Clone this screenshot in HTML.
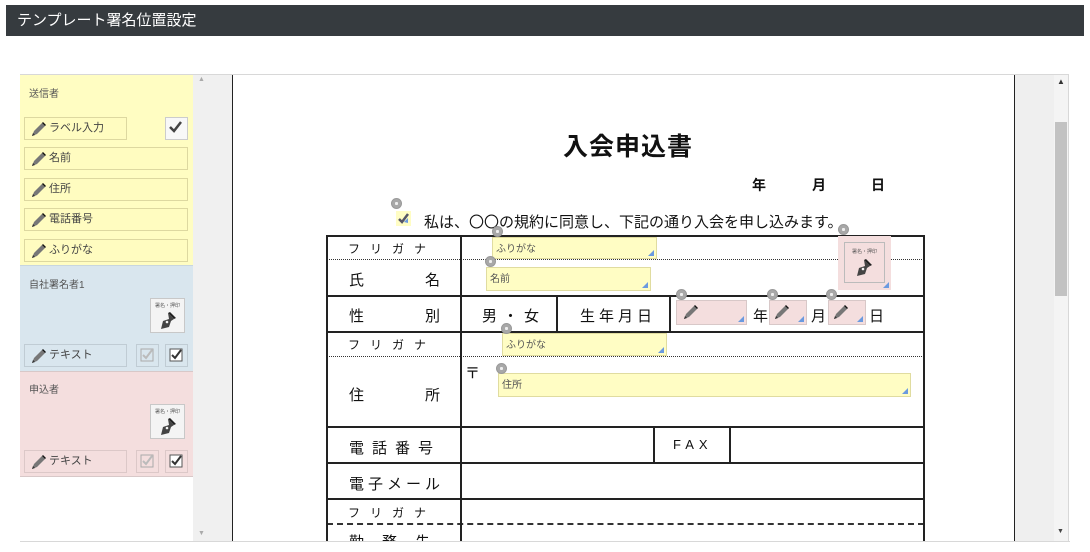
<!DOCTYPE html>
<html><head><meta charset="utf-8">
<style>
*{box-sizing:border-box;margin:0;padding:0}
body{width:1090px;height:549px;overflow:hidden;background:#fff;font-family:"Liberation Sans","Noto Sans CJK JP",sans-serif;position:relative}
.a{position:absolute}
.title{left:6px;top:5px;width:1078px;height:31px;background:#363b3f;color:#fff;font-size:15px;line-height:31px;padding-left:11px}
.btn{position:absolute;border:1px solid #ddd8a0;background:#fffcc0;font-size:11px;color:#444;height:23px;line-height:21px;padding-left:24px}
.pen{position:absolute;left:6px;top:4px}
.cb{position:absolute;width:23px;height:23px;border:1px solid #ccc;background:#f6f6f6}
.lbl{position:absolute;font-size:10px;color:#555}
.sig{position:absolute;width:35px;height:35px;border:1px solid #c8c8c8;background:#f4f4f4}
.h{position:absolute;height:2px;background:#222}
.d{position:absolute;height:0;border-top:1px dotted #333}
.v{position:absolute;width:2px;background:#222}
.t{position:absolute;font-size:15px;color:#111;white-space:nowrap}
.f{position:absolute;background:#fffdc4;border:1px solid #e0dca0;font-size:10px;color:#555;padding:2px 3px}
.pk{position:absolute;background:#f4dede;border:1px solid #d8c8c8}
.x{position:absolute;width:11px;height:11px;border-radius:50%;background:#a8a8a8;border:1px solid #999}
.x:after{content:"";position:absolute;left:3px;top:3px;width:3px;height:3px;background:#eee;border-radius:1px}
.tri{position:absolute;right:2px;bottom:2px;width:0;height:0;border-left:6px solid transparent;border-bottom:6px solid #6b9ae0}
</style></head><body>
<div class="a title">テンプレート署名位置設定</div>

<div class="a" style="left:20px;top:74px;width:1049px;height:468px;border:1px solid #d8d8d8;border-left:none"></div>
<div class="a" style="left:20px;top:75px;width:173px;height:190px;background:#fffdc2"></div>
<div class="a" style="left:20px;top:265px;width:173px;height:106px;background:#d9e6ee;border-top:1px solid #c8d6de"></div>
<div class="a" style="left:20px;top:371px;width:173px;height:106px;background:#f4dede;border-top:1px solid #d8c8c8;border-bottom:1px solid #d8c8c8"></div>
<div class="lbl" style="left:29px;top:85px">送信者</div>
<div class="lbl" style="left:29px;top:276px">自社署名者1</div>
<div class="lbl" style="left:29px;top:381px">申込者</div>

<svg width="0" height="0" style="position:absolute"><defs>
<g id="pn"><path d="M1 14 L3 9 L11 1 L14 4 L6 12 Z" fill="#777"/><path d="M11 1 L14 4 L15 3 L12 0 Z" fill="#111"/><path d="M1 14 L2 11 L4 13 Z" fill="#333"/></g>
<g id="fp"><path d="M9 2 L15 8 L12 10 L10 16 L2 18 L4 10 L10 8 Z" fill="#444"/><path d="M11 1 L17 7 L15 8 L9 2 Z" fill="#222"/><circle cx="8" cy="11" r="1.3" fill="#f4f4f4"/></g>
<g id="ck"><path d="M4 9 L8 13 L15 4" stroke="#444" stroke-width="2.5" fill="none"/></g>
</defs></svg>

<div class="btn" style="left:24px;top:117px;width:103px"><svg class="pen" width="16" height="16"><use href="#pn"/></svg>ラベル入力</div>
<div class="cb" style="left:165px;top:117px;background:#f8f8f8"><svg width="21" height="21"><use href="#ck"/></svg></div>
<div class="btn" style="left:24px;top:147px;width:164px"><svg class="pen" width="16" height="16"><use href="#pn"/></svg>名前</div>
<div class="btn" style="left:24px;top:178px;width:164px"><svg class="pen" width="16" height="16"><use href="#pn"/></svg>住所</div>
<div class="btn" style="left:24px;top:208px;width:164px"><svg class="pen" width="16" height="16"><use href="#pn"/></svg>電話番号</div>
<div class="btn" style="left:24px;top:239px;width:164px"><svg class="pen" width="16" height="16"><use href="#pn"/></svg>ふりがな</div>

<div class="sig" style="left:150px;top:298px"><div style="font-size:5px;color:#555;text-align:center;margin-top:3px">署名・押印</div><svg style="position:absolute;left:8px;top:12px" width="20" height="20"><use href="#fp"/></svg></div>
<div class="btn" style="left:24px;top:344px;width:103px;background:#d9e6ee;border-color:#c0ccd4"><svg class="pen" width="16" height="16"><use href="#pn"/></svg>テキスト</div>
<div class="cb" style="left:136px;top:344px;background:#d9e6ee;border-color:#c0ccd4"><svg width="21" height="21"><rect x="4" y="4" width="12" height="12" fill="none" stroke="#aaa"/><path d="M6 10 L9 13 L15 5" stroke="#bbb" stroke-width="2" fill="none"/></svg></div>
<div class="cb" style="left:165px;top:344px;background:#d9e6ee;border-color:#c0ccd4"><svg width="21" height="21"><rect x="4" y="4" width="12" height="12" fill="#fff" stroke="#555"/><path d="M6 10 L9 13 L15 5" stroke="#333" stroke-width="2" fill="none"/></svg></div>

<div class="sig" style="left:150px;top:404px"><div style="font-size:5px;color:#555;text-align:center;margin-top:3px">署名・押印</div><svg style="position:absolute;left:8px;top:12px" width="20" height="20"><use href="#fp"/></svg></div>
<div class="btn" style="left:24px;top:450px;width:103px;background:#f4dede;border-color:#dcc8c8"><svg class="pen" width="16" height="16"><use href="#pn"/></svg>テキスト</div>
<div class="cb" style="left:136px;top:450px;background:#f4dede;border-color:#dcc8c8"><svg width="21" height="21"><rect x="4" y="4" width="12" height="12" fill="none" stroke="#aaa"/><path d="M6 10 L9 13 L15 5" stroke="#bbb" stroke-width="2" fill="none"/></svg></div>
<div class="cb" style="left:165px;top:450px;background:#f4dede;border-color:#dcc8c8"><svg width="21" height="21"><rect x="4" y="4" width="12" height="12" fill="#fff" stroke="#555"/><path d="M6 10 L9 13 L15 5" stroke="#333" stroke-width="2" fill="none"/></svg></div>

<div class="a" style="left:193px;top:75px;width:39px;height:467px;background:#f0f0f0"></div>
<div class="a" style="left:198px;top:76px;font-size:7px;color:#aaa">▲</div>
<div class="a" style="left:198px;top:530px;font-size:7px;color:#aaa">▼</div>
<div class="a" style="left:232px;top:75px;width:1px;height:467px;background:#222"></div>
<div class="a" style="left:1014px;top:75px;width:1px;height:467px;background:#222"></div>
<div class="a" style="left:1015px;top:75px;width:39px;height:467px;background:#efefef"></div>
<div class="a" style="left:1054px;top:75px;width:14px;height:466px;background:#f4f4f4"></div>
<div class="a" style="left:1055px;top:122px;width:12px;height:174px;background:#c2c2c2"></div>
<div class="a" style="left:1057px;top:77px;font-size:8px;color:#333">▲</div>
<div class="a" style="left:1057px;top:528px;font-size:7px;color:#444">▼</div>

<div class="t" style="left:563px;top:127px;font-size:25px;letter-spacing:1px;font-weight:bold">入会申込書</div>
<div class="t" style="left:752px;top:175px;font-size:14px;font-weight:bold">年</div>
<div class="t" style="left:812px;top:175px;font-size:14px;font-weight:bold">月</div>
<div class="t" style="left:871px;top:175px;font-size:14px;font-weight:bold">日</div>
<div class="a" style="left:396px;top:211px;width:15px;height:15px;background:#fffdc4"><svg width="15" height="15"><path d="M3 8 L6 11 L12 3" stroke="#556" stroke-width="2.5" fill="none"/><path d="M8 11 L12 7 L12 12 Z" fill="#6b9ae0"/></svg></div>
<div class="x" style="left:391px;top:198px"></div>
<div class="t" style="left:424px;top:211px;font-size:15px">私は、〇〇の規約に同意し、下記の通り入会を申し込みます。</div>

<div class="h" style="left:327px;top:235px;width:597px"></div>
<div class="d" style="left:327px;top:259px;width:597px"></div>
<div class="h" style="left:327px;top:295px;width:597px"></div>
<div class="h" style="left:327px;top:331px;width:597px"></div>
<div class="d" style="left:327px;top:356px;width:597px"></div>
<div class="h" style="left:327px;top:426px;width:597px"></div>
<div class="h" style="left:327px;top:462px;width:597px"></div>
<div class="h" style="left:327px;top:498px;width:597px"></div>
<div class="a" style="left:327px;top:523px;width:597px;border-top:2px dashed #333"></div>
<div class="v" style="left:326px;top:235px;height:310px"></div>
<div class="v" style="left:460px;top:235px;height:310px"></div>
<div class="v" style="left:923px;top:235px;height:310px"></div>
<div class="v" style="left:556px;top:295px;height:37px"></div>
<div class="v" style="left:669px;top:295px;height:37px"></div>
<div class="v" style="left:653px;top:426px;height:37px"></div>
<div class="v" style="left:729px;top:426px;height:37px"></div>

<div class="t" style="left:348px;top:240px;font-size:12px;letter-spacing:10px">フリガナ</div>
<div class="t" style="left:349px;top:269px">氏</div><div class="t" style="left:425px;top:269px">名</div>
<div class="t" style="left:349px;top:305px">性</div><div class="t" style="left:425px;top:305px">別</div>
<div class="t" style="left:482px;top:305px;letter-spacing:6px">男・女</div>
<div class="t" style="left:580px;top:305px;letter-spacing:4px">生年月日</div>
<div class="t" style="left:753px;top:305px">年</div>
<div class="t" style="left:811px;top:305px">月</div>
<div class="t" style="left:869px;top:305px">日</div>
<div class="t" style="left:348px;top:336px;font-size:12px;letter-spacing:10px">フリガナ</div>
<div class="t" style="left:465px;top:362px">〒</div>
<div class="t" style="left:349px;top:384px">住</div><div class="t" style="left:425px;top:384px">所</div>
<div class="t" style="left:349px;top:437px;letter-spacing:8px">電話番号</div>
<div class="t" style="left:673px;top:437px;font-size:13px;letter-spacing:5px">FAX</div>
<div class="t" style="left:349px;top:473px;letter-spacing:4px">電子メール</div>
<div class="t" style="left:348px;top:504px;font-size:12px;letter-spacing:10px">フリガナ</div>
<div class="t" style="left:349px;top:531px;letter-spacing:18px">勤務先</div>

<div class="f" style="left:492px;top:237px;width:165px;height:22px">ふりがな<div class="tri"></div></div>
<div class="x" style="left:492px;top:226px"></div>
<div class="f" style="left:486px;top:267px;width:165px;height:24px">名前<div class="tri"></div></div>
<div class="x" style="left:485px;top:256px"></div>
<div class="f" style="left:502px;top:333px;width:165px;height:23px">ふりがな<div class="tri"></div></div>
<div class="x" style="left:501px;top:323px"></div>
<div class="f" style="left:498px;top:373px;width:413px;height:24px">住所<div class="tri"></div></div>
<div class="x" style="left:496px;top:363px"></div>

<div class="pk" style="left:676px;top:300px;width:71px;height:25px"><svg style="position:absolute;left:6px;top:4px" width="16" height="16"><use href="#pn"/></svg><div class="tri"></div></div>
<div class="x" style="left:676px;top:289px"></div>
<div class="pk" style="left:769px;top:300px;width:38px;height:25px"><svg style="position:absolute;left:4px;top:4px" width="16" height="16"><use href="#pn"/></svg><div class="tri"></div></div>
<div class="x" style="left:767px;top:289px"></div>
<div class="pk" style="left:828px;top:300px;width:38px;height:25px"><svg style="position:absolute;left:4px;top:4px" width="16" height="16"><use href="#pn"/></svg><div class="tri"></div></div>
<div class="x" style="left:826px;top:289px"></div>

<div class="pk" style="left:838px;top:236px;width:53px;height:54px;border:none"><div style="position:absolute;left:6px;top:6px;width:41px;height:41px;border:1px solid #bbb;background:#f4dede"><div style="font-size:5px;color:#555;text-align:center;margin-top:5px">署名・押印</div><svg style="position:absolute;left:10px;top:15px" width="20" height="20"><use href="#fp"/></svg></div><div class="tri"></div></div>
<div class="x" style="left:838px;top:224px"></div>

<!-- bottom clip -->
<div class="a" style="left:20px;top:541px;width:1050px;height:8px;background:#fff;border-top:1px solid #d8d8d8;z-index:10"></div>
</body></html>
